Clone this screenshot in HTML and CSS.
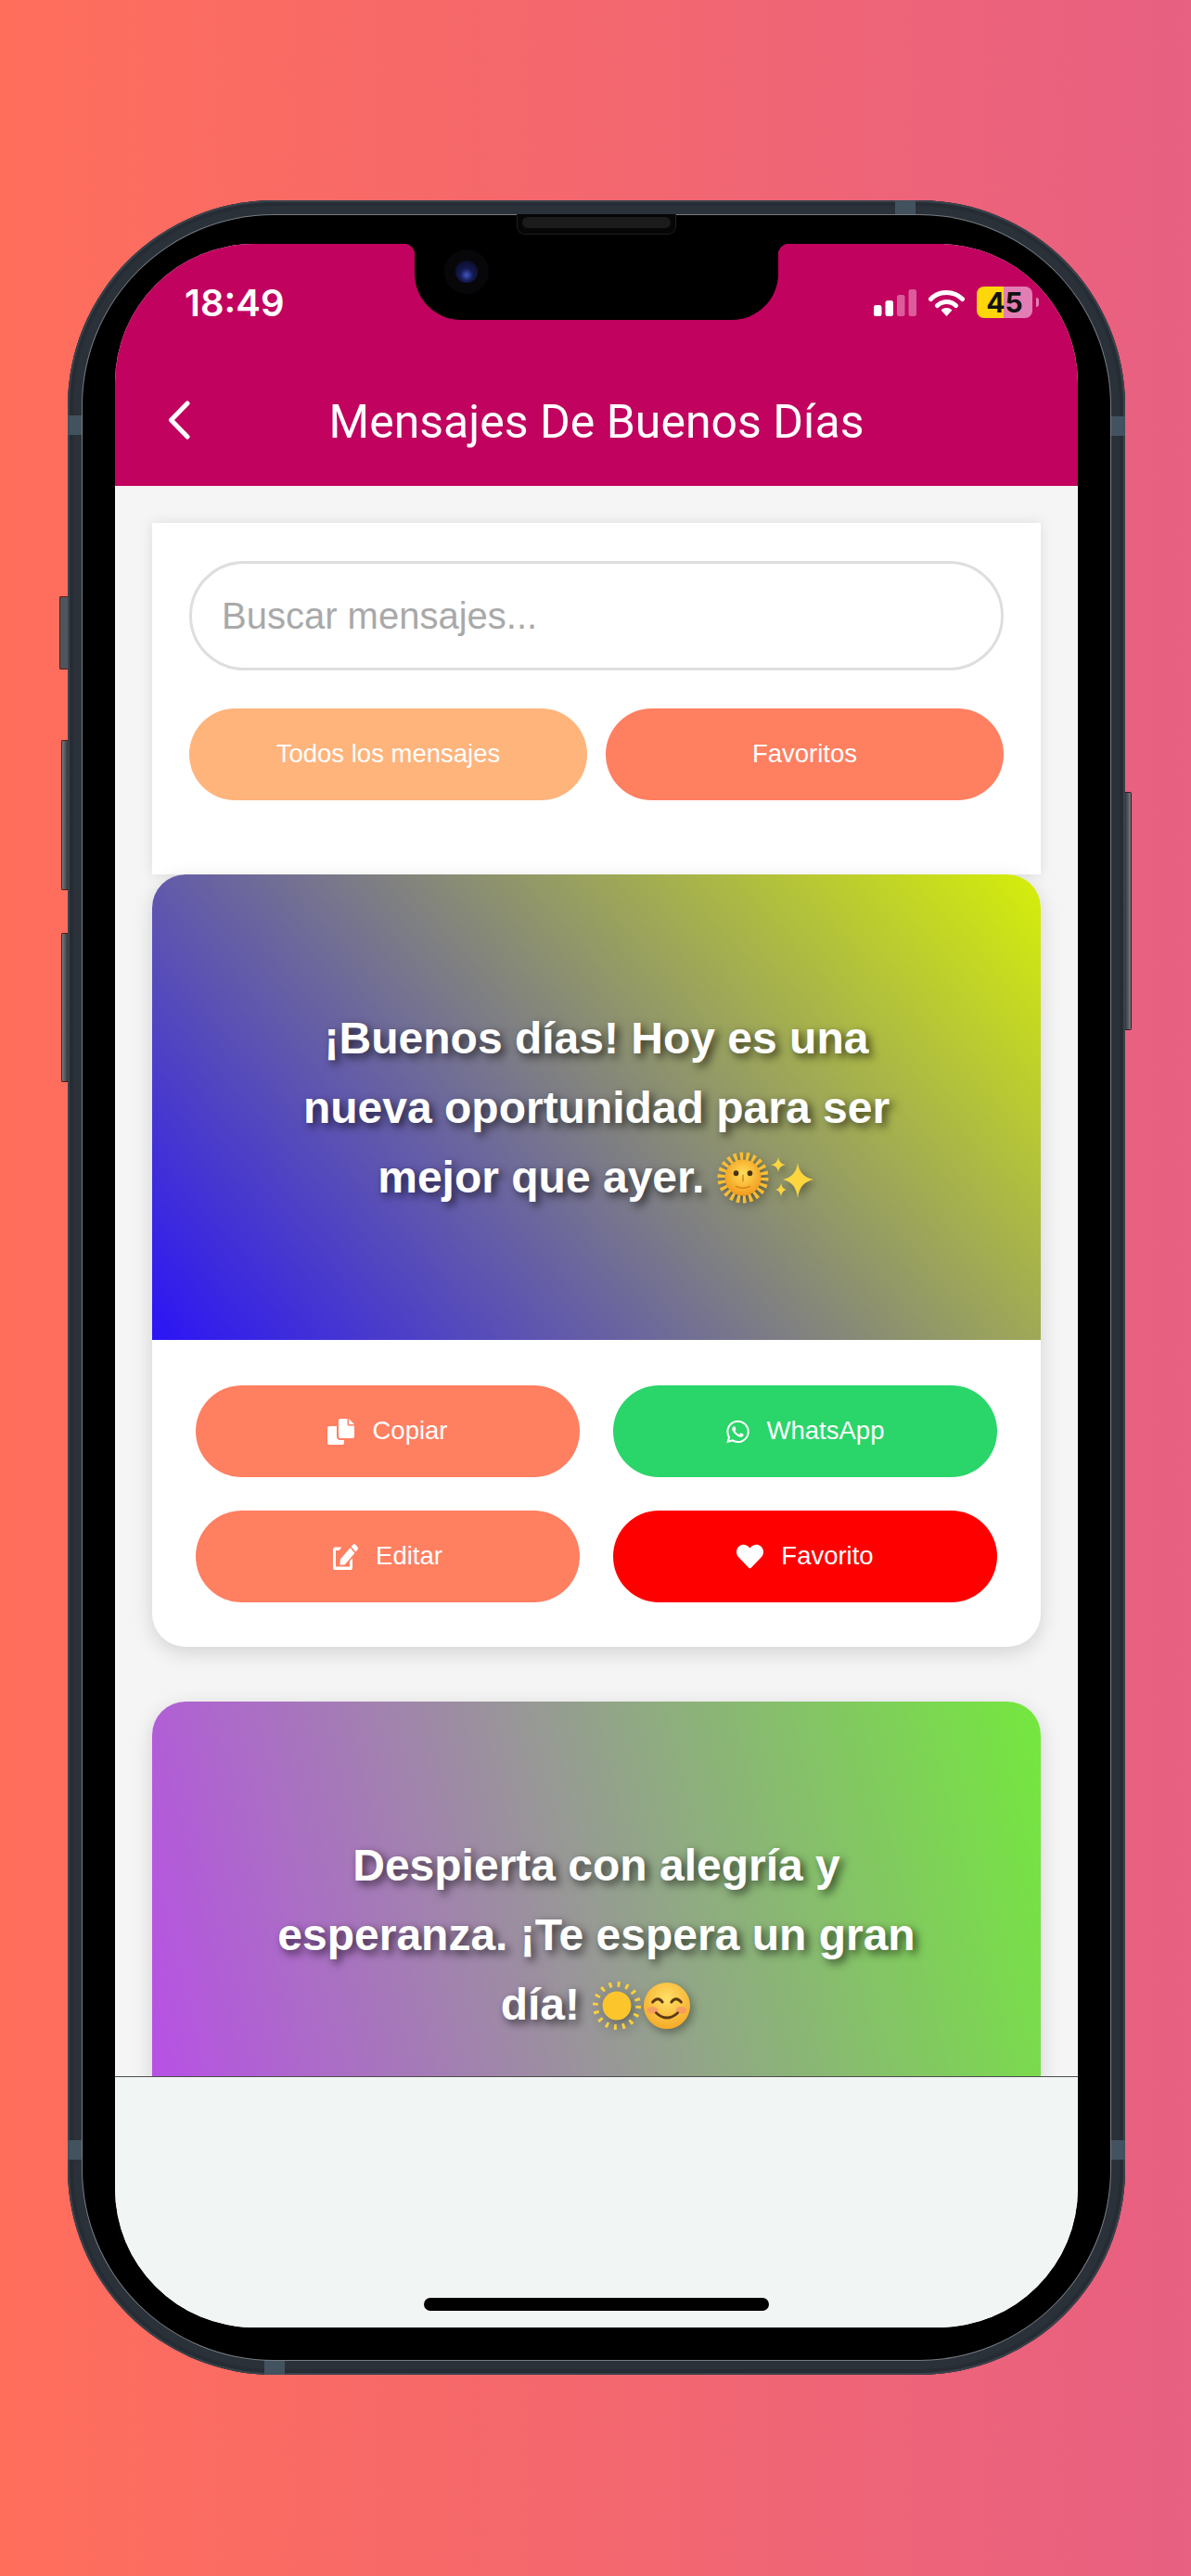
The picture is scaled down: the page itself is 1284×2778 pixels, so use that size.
FILE: index.html
```html
<!DOCTYPE html>
<html lang="es">
<head>
    <meta charset="UTF-8">
    <meta name="viewport" content="width=device-width, initial-scale=1.0">
    <title>Mensajes De Buenos Días</title>
    <link rel="stylesheet" href="styles.css">
</head>
<body>
    <div class="phone">
        <!-- side buttons and antenna bands -->
        <span class="side-btn btn-mute"></span>
        <span class="side-btn btn-vol-up"></span>
        <span class="side-btn btn-vol-down"></span>
        <span class="side-btn btn-power"></span>
        <span class="band band-top"></span>
        <span class="band band-bottom"></span>
        <span class="band band-left-a"></span>
        <span class="band band-left-b"></span>
        <span class="band band-right-a"></span>
        <span class="band band-right-b"></span>

        <div class="bezel">
            <div class="speaker"><span class="speaker-grill"></span></div>
            <div class="screen">
                <div class="notch"><span class="camera"><span class="lens"></span></span></div>

                <header class="app-header">
                    <div class="status-bar">
                        <span class="time">18:49</span>
                        <div class="status-icons">
                            <svg class="signal" viewBox="0 0 46 29" width="46" height="29">
                                <rect x="0" y="17" width="8.5" height="12" rx="2.5" fill="#fff"/>
                                <rect x="12.5" y="12" width="8.5" height="17" rx="2.5" fill="#fff"/>
                                <rect x="25" y="6" width="8.5" height="23" rx="2.5" fill="#dc5c9b"/>
                                <rect x="37.5" y="0" width="8.5" height="29" rx="2.5" fill="#dc5c9b"/>
                            </svg>
                            <svg class="wifi" viewBox="0 0 39 29" width="39" height="29">
                                <path d="M2.5 10.5a24 24 0 0 1 34 0" fill="none" stroke="#fff" stroke-width="5" stroke-linecap="round"/>
                                <path d="M9.5 17.5a14.5 14.5 0 0 1 20 0" fill="none" stroke="#fff" stroke-width="5" stroke-linecap="round"/>
                                <path d="M13.5 22.5a8.5 8.5 0 0 1 12 0L19.5 29z" fill="#fff"/>
                            </svg>
                            <div class="battery">45</div>
                        </div>
                    </div>
                    <div class="title-bar">
                        <svg class="back" viewBox="0 0 24 42" width="24" height="42">
                            <path d="M21 3 3.5 21 21 39" fill="none" stroke="#fff" stroke-width="5" stroke-linecap="round" stroke-linejoin="round"/>
                        </svg>
                        <h1 class="title">Mensajes De Buenos Días</h1>
                        <span class="title-spacer"></span>
                    </div>
                </header>

                <main class="content">
                    <section class="search-card">
                        <input class="search-input" type="text" placeholder="Buscar mensajes...">
                        <div class="tabs">
                            <button class="tab tab-all">Todos los mensajes</button>
                            <button class="tab tab-fav">Favoritos</button>
                        </div>
                    </section>

                    <article class="card">
                        <div class="message msg-one">
                            <p>¡Buenos días! Hoy es una nueva oportunidad para ser mejor que ayer.
                                <svg class="emoji" viewBox="0 0 60 60" width="56" height="56">
                                    <defs>
                                        <radialGradient id="sunFace" cx="0.5" cy="0.4" r="0.6">
                                            <stop offset="0" stop-color="#ffdf5a"/>
                                            <stop offset="1" stop-color="#f29a1c"/>
                                        </radialGradient>
                                    </defs>
                                    <circle cx="30" cy="30" r="25" fill="none" stroke="#f9bd33" stroke-width="9" stroke-dasharray="3.6 3.5"/>
                                    <circle cx="30" cy="30" r="21" fill="url(#sunFace)"/>
                                    <ellipse cx="22" cy="25" rx="3" ry="3.2" fill="#4a3312"/>
                                    <ellipse cx="38" cy="25" rx="3" ry="3.2" fill="#4a3312"/>
                                    <path d="M30 27v7M22 40q8 4 16 0" fill="none" stroke="#d9831a" stroke-width="1.6" stroke-linecap="round"/>
                                </svg><svg class="emoji" viewBox="0 0 50 50" width="50" height="50">
                                    <path d="M31 6q2 15 17 18-15 3-17 20-2-17-16-20 14-3 16-18z" fill="#fcd53f"/>
                                    <path d="M10 0q1 7 8 8-7 1-8 8-1-7-8-8 7-1 8-8z" fill="#fcd53f"/>
                                    <path d="M13 28q1 6 6 7-5 1-6 7-1-6-6-7 5-1 6-7z" fill="#fcd53f"/>
                                </svg>
                            </p>
                        </div>
                        <div class="actions">
                            <button class="action action-coral">
                                <svg class="icon" viewBox="0 0 29 28" width="29" height="28">
                                    <path d="M12 2a2 2 0 0 1 2-2h7.5v6a1.5 1.5 0 0 0 1.5 1.5h6V19a2 2 0 0 1-2 2H14a2 2 0 0 1-2-2z" fill="#fff"/>
                                    <path d="M23 0l6 6h-6z" fill="#fff"/>
                                    <path d="M0 10a2 2 0 0 1 2-2h8v11a4 4 0 0 0 4 4h4v3a2 2 0 0 1-2 2H2a2 2 0 0 1-2-2z" fill="#fff"/>
                                </svg>
                                Copiar
                            </button>
                            <button class="action action-green">
                                <svg class="icon" viewBox="0 0 448 512" width="25" height="28">
                                    <path fill="#fff" d="M380.9 97.1C339 55.1 283.2 32 223.9 32c-122.4 0-222 99.6-222 222 0 39.1 10.2 77.3 29.6 111L0 480l117.7-30.9c32.4 17.7 68.9 27 106.1 27h.1c122.3 0 224.1-99.6 224.1-222 0-59.3-25.2-115-67.1-157zm-157 341.6c-33.2 0-65.7-8.9-94-25.7l-6.7-4-69.8 18.3L72 359.2l-4.4-7c-18.5-29.4-28.2-63.3-28.2-98.2 0-101.7 82.8-184.5 184.6-184.5 49.3 0 95.6 19.2 130.4 54.1 34.8 34.9 56.2 81.2 56.1 130.5 0 101.8-84.9 184.6-186.6 184.6zm101.2-138.2c-5.5-2.8-32.8-16.2-37.9-18-5.1-1.9-8.8-2.8-12.5 2.8-3.7 5.6-14.3 18-17.6 21.8-3.2 3.7-6.5 4.2-12 1.4-32.6-16.3-54-29.1-75.5-66-5.7-9.8 5.7-9.1 16.3-30.3 1.8-3.7.9-6.9-.5-9.7-1.4-2.8-12.5-30.1-17.1-41.2-4.5-10.8-9.1-9.3-12.5-9.5-3.2-.2-6.9-.2-10.6-.2-3.7 0-9.7 1.4-14.8 6.9-5.1 5.6-19.4 19-19.4 46.3 0 27.3 19.9 53.7 22.6 57.4 2.8 3.7 39.1 59.7 94.8 83.8 35.2 15.2 49 16.5 66.6 13.9 10.7-1.6 32.8-13.4 37.4-26.4 4.6-13 4.6-24.1 3.2-26.4-1.3-2.5-5-3.9-10.5-6.6z"/>
                                </svg>
                                WhatsApp
                            </button>
                            <button class="action action-coral">
                                <svg class="icon" viewBox="0 0 576 512" width="27" height="28" preserveAspectRatio="none">
                                    <path fill="#fff" d="M402.6 83.2l90.2 90.2c3.8 3.8 3.8 10 0 13.8L274.4 405.6l-92.8 10.3c-12.4 1.4-22.9-9.1-21.5-21.5l10.3-92.8L388.8 83.2c3.8-3.8 10-3.8 13.8 0zm162-22.9l-48.8-48.8c-15.2-15.2-39.9-15.2-55.2 0l-35.4 35.4c-3.8 3.8-3.8 10 0 13.8l90.2 90.2c3.8 3.8 10 3.8 13.8 0l35.4-35.4c15.2-15.3 15.2-40 0-55.2zM384 346.2V448H64V128h73.1c3.2 0 6.2-1.3 8.5-3.5l40-40c7.6-7.6 2.2-20.5-8.5-20.5H48C21.5 64 0 85.5 0 112v352c0 26.5 21.5 48 48 48h352c26.5 0 48-21.5 48-48V306.2c0-10.7-12.9-16-20.5-8.5l-40 40c-2.2 2.3-3.5 5.3-3.5 8.5z"/>
                                </svg>
                                Editar
                            </button>
                            <button class="action action-red">
                                <svg class="icon" viewBox="0 0 512 512" width="29" height="29">
                                    <path fill="#fff" d="M462.3 62.6C407.5 15.9 326 24.3 275.7 76.2L256 96.5l-19.7-20.3C186.1 24.3 104.5 15.9 49.7 62.6c-62.8 53.6-66.1 149.8-9.9 207.9l193.5 199.8c12.5 12.9 32.8 12.9 45.3 0l193.5-199.8c56.3-58.1 53-154.3-9.8-207.9z"/>
                                </svg>
                                Favorito
                            </button>
                        </div>
                    </article>

                    <article class="card">
                        <div class="message msg-two">
                            <p>Despierta con alegría y esperanza. ¡Te espera un gran día!
                                <svg class="emoji" viewBox="0 0 56 56" width="54" height="54">
                                    <circle cx="28" cy="28" r="24" fill="none" stroke="#fdd03b" stroke-width="6" stroke-dasharray="3 6.42"/>
                                    <circle cx="28" cy="28" r="16" fill="#fcc52b"/>
                                </svg><svg class="emoji" viewBox="0 0 56 56" width="54" height="54">
                                    <defs>
                                        <radialGradient id="smile" cx="0.5" cy="0.35" r="0.7">
                                            <stop offset="0" stop-color="#ffe067"/>
                                            <stop offset="1" stop-color="#f5a623"/>
                                        </radialGradient>
                                    </defs>
                                    <circle cx="28" cy="28" r="26" fill="url(#smile)"/>
                                    <ellipse cx="12" cy="33" rx="6" ry="4" fill="#f58f6c" opacity="0.7"/>
                                    <ellipse cx="44" cy="33" rx="6" ry="4" fill="#f58f6c" opacity="0.7"/>
                                    <path d="M12 24q6-7 11 0M33 24q5-7 11 0" fill="none" stroke="#5b3a12" stroke-width="3" stroke-linecap="round"/>
                                    <path d="M16 36q12 11 24 0" fill="none" stroke="#5b3a12" stroke-width="3" stroke-linecap="round"/>
                                </svg>
                            </p>
                        </div>
                    </article>
                </main>

                <footer class="app-footer"><span class="home-bar"></span></footer>
            </div>
        </div>
    </div>
</body>
</html>
```

FILE: styles.css
```css
* {
    box-sizing: border-box;
}
html, body {
    margin: 0;
    padding: 0;
}
body {
    width: 1284px;
    height: 2778px;
    padding: 216px 0 0 73px;
    overflow: hidden;
    background: linear-gradient(90deg, #ff6e5b, #e86082);
    font-family: "Liberation Sans", Arial, sans-serif;
}
button {
    font-family: inherit;
    border: none;
    color: white;
    cursor: pointer;
}

/* device shell */
.phone {
    position: relative;
    width: 1140px;
    height: 2345px;
    padding: 16px;
    border-radius: 222px;
    background: #2a3139;
    box-shadow: inset 0 0 0 2px #3a424b, inset 0 0 0 6px #262c33;
}
.bezel {
    position: relative;
    width: 100%;
    height: 100%;
    padding: 31px 35px 35px;
    border-radius: 206px;
    background: black;
    box-shadow: 0 0 0 1px #777c82;
}
.side-btn {
    position: absolute;
    width: 9px;
    background: linear-gradient(90deg, #777b80, #34383d);
    border: 1px solid #5a1a14;
    border-right: none;
    border-radius: 2px 0 0 2px;
}
.btn-mute { left: -9px; top: 427px; height: 79px; background: #50555b; }
.btn-vol-up { left: -7px; width: 7px; top: 582px; height: 162px; }
.btn-vol-down { left: -7px; width: 7px; top: 790px; height: 161px; }
.btn-power {
    right: -7px;
    width: 7px;
    top: 638px;
    height: 257px;
    border: 1px solid #3a1828;
    border-left: none;
    border-radius: 0 2px 2px 0;
    background: linear-gradient(90deg, #34383d, #777b80);
}
.band {
    position: absolute;
    background: #43525f;
}
.band-top { left: 892px; top: 0; width: 22px; height: 16px; }
.band-bottom { left: 212px; bottom: 0; width: 22px; height: 16px; }
.band-left-a { left: 0; top: 232px; width: 16px; height: 21px; }
.band-left-b { left: 0; top: 2092px; width: 16px; height: 21px; }
.band-right-a { right: 0; top: 233px; width: 16px; height: 21px; }
.band-right-b { right: 0; top: 2092px; width: 16px; height: 21px; }
.speaker {
    position: absolute;
    left: 468px;
    top: -1px;
    z-index: 2;
    width: 172px;
    height: 22px;
    padding: 3px 5px;
    background: #060606;
    border: 1px solid #1e1e1e;
    border-top: none;
    border-radius: 0 0 9px 9px;
}
.speaker-grill {
    display: block;
    height: 12px;
    border-radius: 6px;
    background: #1b1b1b;
}

/* screen */
.screen {
    position: relative;
    display: flex;
    flex-direction: column;
    width: 1038px;
    height: 2247px;
    overflow: hidden;
    border-radius: 150px;
    background: #f5f5f5;
}
.notch {
    position: absolute;
    left: 323px;
    top: 0;
    z-index: 3;
    width: 392px;
    height: 82px;
    background: black;
    border-radius: 0 0 50px 50px;
}
.notch::before, .notch::after {
    content: "";
    position: absolute;
    top: 0;
    width: 12px;
    height: 12px;
}
.notch::before {
    left: -12px;
    background: radial-gradient(circle at 0 100%, transparent 12px, black 12.5px);
}
.notch::after {
    right: -12px;
    background: radial-gradient(circle at 100% 100%, transparent 12px, black 12.5px);
}
.camera {
    position: absolute;
    left: 32px;
    top: 6px;
    width: 48px;
    height: 48px;
    padding: 12px;
    border-radius: 50%;
    background: #070709;
}
.lens {
    display: block;
    width: 24px;
    height: 24px;
    border-radius: 50%;
    background: radial-gradient(circle at 50% 65%, #3f57c4 0, #151a52 35%, #0c0e2c 75%, #1c2040 100%);
}

/* header */
.app-header {
    flex: none;
    height: 261px;
    padding-top: 43px;
    background: #c1035f;
    color: white;
}
.status-bar {
    display: flex;
    justify-content: space-between;
    align-items: center;
    height: 40px;
    padding: 0 42px 0 75px;
}
.time {
    font-family: Inter, sans-serif;
    font-size: 40px;
    font-weight: 600;
}
.status-icons {
    display: flex;
    align-items: center;
    gap: 13px;
}
.battery {
    position: relative;
    width: 60px;
    height: 34px;
    margin-right: 7px;
    border-radius: 8px;
    background: linear-gradient(90deg, #ffd60a 48%, #e37eb5 48%);
    color: #111;
    font-family: Inter, sans-serif;
    font-size: 30px;
    font-weight: 700;
    line-height: 34px;
    text-align: center;
}
.battery::after {
    content: "";
    position: absolute;
    right: -7px;
    top: 12px;
    width: 3px;
    height: 10px;
    border-radius: 0 4px 4px 0;
    background: #e37eb5;
}
.title-bar {
    display: flex;
    align-items: center;
    height: 74px;
    margin-top: 70px;
    padding: 0 57px;
}
.back {
    flex: none;
}
.title {
    flex: 1;
    margin: 0;
    padding-top: 3px;
    font-family: Roboto, sans-serif;
    font-size: 50px;
    font-weight: 400;
    text-align: center;
}
.title-spacer {
    flex: none;
    width: 24px;
}

/* content */
.content {
    flex: 1;
    min-height: 0;
    padding: 40px 40px 0;
    overflow: hidden;
}
.search-card {
    padding: 41px 40px 80px;
    background: white;
    box-shadow: 0 0 14px rgba(0, 0, 0, 0.1);
}
.search-input {
    display: block;
    width: 100%;
    height: 118px;
    padding: 0 32px;
    margin-bottom: 41px;
    border: 3px solid #dedede;
    border-radius: 59px;
    background: white;
    font-family: inherit;
    font-size: 40px;
}
.search-input::placeholder {
    color: #a9a9a9;
    opacity: 1;
}
.tabs {
    display: grid;
    grid-template-columns: 429px 429px;
    gap: 20px;
}
.tab {
    height: 99px;
    padding-bottom: 3px;
    border-radius: 50px;
    font-size: 27.5px;
}
.tab-all {
    background-color: #ffb47c;
}
.tab-fav {
    background-color: #ff7f61;
}
.card {
    position: relative;
    margin-bottom: 59px;
    border-radius: 36px;
    overflow: hidden;
    background: white;
    box-shadow: 0 6px 22px rgba(0, 0, 0, 0.14);
}
.message {
    display: flex;
    align-items: center;
    justify-content: center;
    height: 502px;
    padding: 0 130px;
}
.message p {
    margin: 0;
    color: white;
    font-size: 48px;
    font-weight: bold;
    line-height: 75px;
    text-align: center;
    text-shadow: 4px 4px 10px rgba(0, 0, 0, 0.65);
}
.msg-one {
    background: linear-gradient(48deg, #2b14f6, #d6ef0a);
}
.msg-two {
    background: linear-gradient(76deg, #b94de9, #74e83e);
}
.emoji {
    vertical-align: -12px;
    filter: drop-shadow(3px 4px 5px rgba(0, 0, 0, 0.35));
}
.actions {
    display: grid;
    grid-template-columns: 1fr 1fr;
    gap: 36px;
    padding: 49px 47px 48px;
}
.action {
    display: flex;
    align-items: center;
    justify-content: center;
    gap: 19px;
    height: 99px;
    padding-bottom: 3px;
    border-radius: 50px;
    font-size: 27.5px;
}
.action .icon {
    margin-top: 2px;
}
.action-coral {
    background-color: #ff7f61;
}
.action-green {
    background-color: #2ad569;
}
.action-red {
    background-color: #ff0000;
}

/* bottom strip */
.app-footer {
    flex: none;
    display: flex;
    justify-content: center;
    align-items: flex-end;
    height: 271px;
    padding-bottom: 18px;
    border-top: 1px solid #4d4d4d;
    background: #f1f6f4;
}
.home-bar {
    width: 372px;
    height: 14px;
    border-radius: 7px;
    background: black;
}
```
